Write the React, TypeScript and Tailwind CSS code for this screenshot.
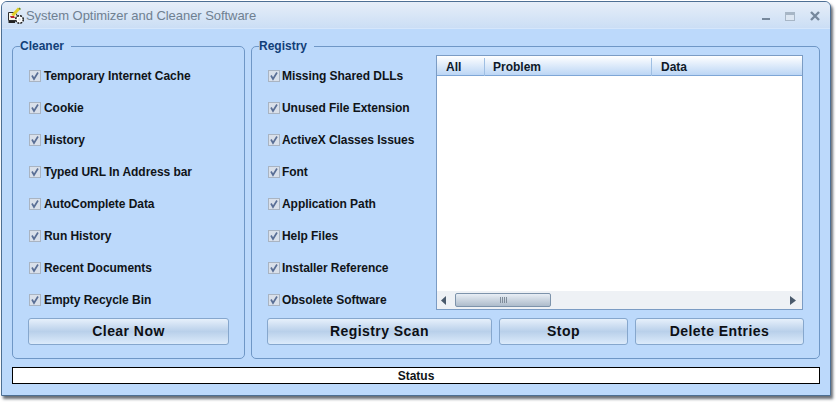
const cleaner = ["Temporary Internet Cache","Cookie","History","Typed URL In Address bar","AutoComplete Data","Run History","Recent Documents","Empty Recycle Bin"];
const registry = ["Missing Shared DLLs","Unused File Extension","ActiveX Classes Issues","Font","Application Path","Help Files","Installer Reference","Obsolete Software"];

function Check({ label, gap }: { label: string; gap: string }) {
  return (
    <div className={`${gap} flex h-[32px] items-center text-[12px] font-bold tracking-[-0.05px] text-[#101418]`}>
      <svg width="12" height="12" viewBox="0 0 12 12" className="shrink-0">
        <rect x="0.5" y="0.5" width="11" height="11" fill="#d9e0ea" stroke="#a9b4c2" />
        <path d="M3 5.5 L5 9 L9 2.5" fill="none" stroke="#5a6f96" strokeWidth="1.7" />
      </svg>
      <span className="whitespace-nowrap">{label}</span>
    </div>
  );
}

function Btn({ label, w }: { label: string; w: string }) {
  return (
    <button className={`${w} h-[27px] rounded-[3px] border border-[#86a7cd] bg-gradient-to-b from-[#e6f0fb] via-[#b9d0ea] to-[#dcebfb] text-[14px] font-bold tracking-[0.45px] text-[#0c0f14]`}>
      {label}
    </button>
  );
}

function Group({ title, className, children }: { title: string; className: string; children: React.ReactNode }) {
  return (
    <fieldset className={`${className} h-[319px] rounded-[5px] border border-[#6f97c6]`}>
      <legend className="ml-[-8px] pr-[7px] text-[12px] font-bold leading-[12px] text-[#123f78]">{title}</legend>
      {children}
    </fieldset>
  );
}

export default function App() {
  return (
    <div className="h-[402px] w-[838px] bg-white pl-[1px] pt-[1px] font-['Liberation_Sans',sans-serif]">
      <div className="flex h-[395px] w-[830px] flex-col rounded-t-[6px] border border-[#4d6f93] bg-[#bcd9fb] shadow-[2px_3px_3px_#6a6f76]">
        <div className="flex h-[27px] shrink-0 items-center rounded-t-[5px] border-b border-[#d5e6fb] bg-gradient-to-b from-[#e6eef8] to-[#cbdef5] pl-[5px] pr-[10px] pt-[2px]">
          <svg width="18" height="18" viewBox="0 0 18 18" className="shrink-0">
            <path d="M1.5 5.5 H8 L10 8 V13.5 H1.5Z" fill="#f7f3e6" stroke="#2e2e2e" />
            <path d="M5.5 8.5 L12 1.5" stroke="#e2cf27" strokeWidth="3" />
            <path d="M12 1 L13.5 2.5" stroke="#6a8a2a" strokeWidth="1.5" />
            <path d="M3 9 H7 L8 11 H4Z" fill="#b8242e" />
            <path d="M1.5 14 H8 V16 H1.5Z" fill="#222" />
            <circle cx="12.5" cy="12.5" r="3.8" fill="#ffffff" stroke="#1d1d1d" strokeWidth="1.5" strokeDasharray="2 1" />
            <circle cx="12.5" cy="12.5" r="1.4" fill="#dfe6ee" />
          </svg>
          <span className="ml-[1px] text-[13px] tracking-[-0.05px] text-[#6f8091]">System Optimizer and Cleaner Software</span>
          <div className="ml-auto flex items-center gap-[15px]">
            <svg width="8" height="9" viewBox="0 0 8 9"><rect x="0" y="6" width="8" height="2" fill="#76889c" /></svg>
            <svg width="10" height="9" viewBox="0 0 10 9"><rect x="0.5" y="0.5" width="9" height="8" fill="#dce6f2" stroke="#a7b6c6" /><rect x="0" y="1" width="10" height="2" fill="#a7b6c6" /></svg>
            <svg width="10" height="10" viewBox="0 0 10 10"><path d="M1 1 L9 9 M9 1 L1 9" stroke="#76889c" strokeWidth="2.4" /></svg>
          </div>
        </div>
        <div className="flex flex-col px-[10px] pt-[11px]">
          <div className="flex gap-[6px]">
            <Group title="Cleaner" className="w-[233px] px-[15px]">
              <div className="mt-[8px] flex flex-col pl-[1px]">
                {cleaner.map((c) => <Check key={c} label={c} gap="gap-[3px]" />)}
              </div>
              <div className="mt-[2px]"><Btn label="Clear Now" w="w-[201px]" /></div>
            </Group>
            <Group title="Registry" className="w-[568px] px-[15px]">
              <div className="flex">
                <div className="mt-[8px] flex w-[169px] flex-col pl-[1px]">
                  {registry.map((c) => <Check key={c} label={c} gap="gap-[2px]" />)}
                </div>
                <div className="mt-[3px] flex h-[255px] w-[367px] flex-col border border-[#7b9cc4] bg-white">
                  <div className="flex h-[20px] shrink-0 items-center border-b border-[#7ea6d6] bg-gradient-to-b from-white to-[#bcd6f5] pt-[2px] text-[12px] font-bold text-[#0e1a2a]">
                    <div className="w-[48px] border-r border-[#9fbfe3] pl-[9px]">All</div>
                    <div className="w-[167px] border-r border-[#9fbfe3] pl-[8px]">Problem</div>
                    <div className="pl-[9px]">Data</div>
                  </div>
                  <div className="flex-1" />
                  <div className="flex h-[18px] shrink-0 items-center bg-[#eef1f5] pl-[4px] pr-[6px]">
                    <svg width="6" height="9" viewBox="0 0 6 9"><path d="M5 0 V9 L0 4.5Z" fill="#4a5a6c" /></svg>
                    <div className="ml-[8px] flex h-[14px] w-[96px] items-center justify-center rounded-[2px] border border-[#7d93ab] bg-gradient-to-b from-[#e8eef5] to-[#aebccb]">
                      <div className="h-[6px] w-[7px] bg-[repeating-linear-gradient(90deg,#7f8c9a_0_1px,transparent_1px_2px)]" />
                    </div>
                    <svg className="ml-auto" width="6" height="9" viewBox="0 0 6 9"><path d="M0 0 V9 L6 4.5Z" fill="#4a5a6c" /></svg>
                  </div>
                </div>
              </div>
              <div className="mt-[2px] flex gap-[7px]">
                <Btn label="Registry Scan" w="w-[225px]" />
                <Btn label="Stop" w="w-[129px]" />
                <Btn label="Delete Entries" w="w-[169px]" />
              </div>
            </Group>
          </div>
          <div className="mt-[8px] flex h-[17px] items-center justify-center border border-black bg-white text-[12px] font-bold text-[#101418]">Status</div>
        </div>
      </div>
    </div>
  );
}
